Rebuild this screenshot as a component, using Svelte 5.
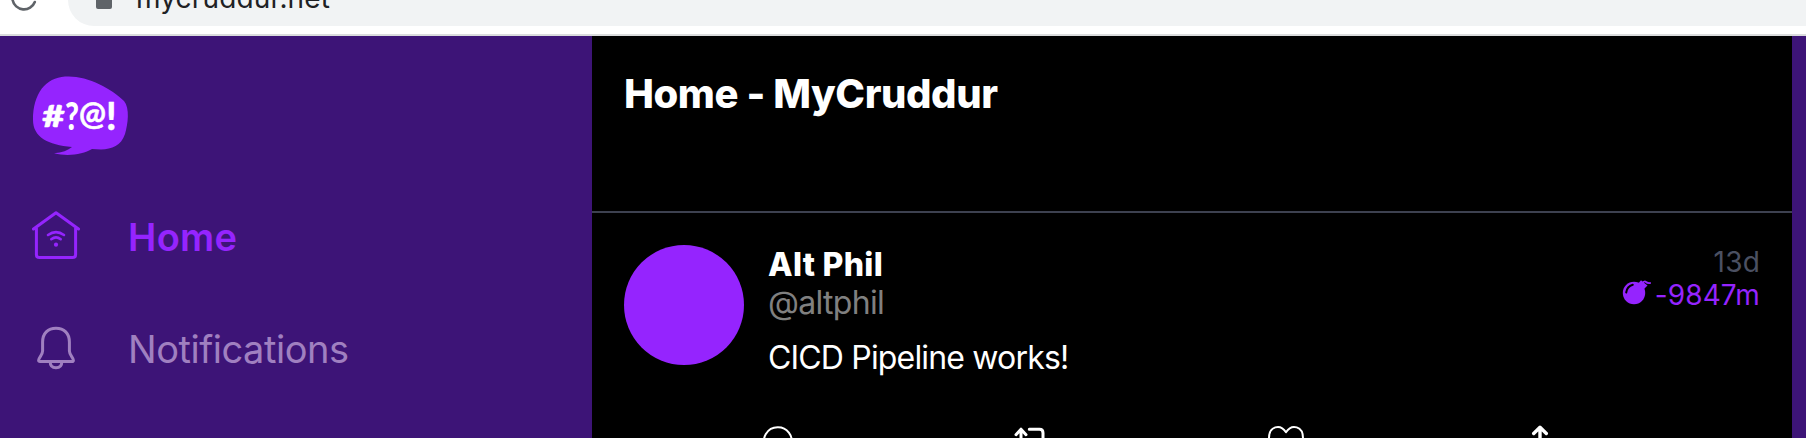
<script>
  const post = {
    name: 'Alt Phil',
    handle: '@altphil',
    message: 'CICD Pipeline works!',
    created: '13d',
    expires: '-9847m'
  };
</script>

<div class="window">
  <div class="toolbar">
    <svg class="reload" width="68" height="34" viewBox="0 0 68 34" aria-hidden="true">
      <path d="M34.8 2A11.6 11.6 0 0 1 12.6 0" fill="none" stroke="#5f6368" stroke-width="2.6" stroke-linecap="round" />
    </svg>
    <div class="address">
      <span class="lock"></span>
      <span class="url">mycruddur.net</span>
    </div>
  </div>

  <div class="app">
    <nav class="sidebar">
      <svg class="logo" width="96" height="80" viewBox="0 0 96 80" role="img" aria-label="Cruddur">
        <path d="M0 44C0 17 13 2 32 .6C53-1 78 12 91 25C97 32 95 48 92 58C88 70 79 73 68 73.5L59 73C50 78 36 81 21 77.3C29 76.5 35 74.5 39 71C15 69 0 61 0 44Z" fill="#9524fe" />
        <g class="mark" fill="#fff" stroke="#fff" stroke-linejoin="round">
          <text x="9.2" y="50.5" font-size="30" stroke-width=".6" textLength="22.4" lengthAdjust="spacingAndGlyphs">#</text>
          <text class="query" x="32" y="53.5" font-size="37" stroke-width="0" textLength="14" lengthAdjust="spacingAndGlyphs">?</text>
          <text class="at" x="46" y="49" font-size="33" stroke-width=".6" textLength="27" lengthAdjust="spacingAndGlyphs">@</text>
          <text x="73" y="53.5" font-size="37" stroke-width=".3">!</text>
        </g>
      </svg>

      <div class="item active">
        <svg width="48" height="48" viewBox="0 0 48 48" fill="none" stroke="currentColor" stroke-width="3" stroke-linecap="round" stroke-linejoin="round" aria-hidden="true">
          <path d="M1.5 18L24 1.7L46.5 18M4.4 17V43.5Q4.4 46.6 7.5 46.6H40.5Q43.6 46.6 43.6 43.5V17" />
          <path d="M16 24Q24 18.2 32 24M19.3 28.2Q24 24.5 28.7 28.2" stroke-width="2.6" />
          <circle cx="24" cy="33.7" r="2.1" fill="currentColor" stroke="none" />
        </svg>
        <span>Home</span>
      </div>
      <div class="item">
        <svg width="48" height="48" viewBox="0 0 48 48" fill="none" stroke="currentColor" stroke-width="3" stroke-linecap="round" stroke-linejoin="round" aria-hidden="true">
          <path d="M10.6 18C10.6 9.5 16 4.2 24 4.2S37.4 9.5 37.4 18V27C37.4 31 41.4 34 41.4 36.2Q41.4 37.5 40 37.5H8Q6.6 37.5 6.6 36.2C6.6 34 10.6 31 10.6 27Z" />
          <path d="M18.2 38C18.2 42 20.5 43.7 24 43.7S29.8 42 29.8 38" />
        </svg>
        <span>Notifications</span>
      </div>
    </nav>

    <main class="feed">
      <header><h1>Home - MyCruddur</h1></header>
      <article>
        <div class="avatar"></div>
        <div class="content">
          <div class="meta">
            <div class="identity">
              <strong>{post.name}</strong>
              <span class="handle">{post.handle}</span>
            </div>
            <div class="times">
              <span class="created">{post.created}</span>
              <span class="expires">
                <svg width="30" height="25" viewBox="0 0 30 25" aria-hidden="true">
                  <circle cx="12" cy="13" r="11.2" fill="#9524fe" />
                  <path d="M16.2 3.5L19 .2L25.5 5.5L22 9Z" fill="#9524fe" />
                  <path d="M20.5 3Q22.5 .5 24 2T28.8 2.9" fill="none" stroke="#9524fe" stroke-width="1.8" />
                  <path d="M4.2 12.5Q5 6.5 10.8 4.8" fill="none" stroke="#000" stroke-width="2" stroke-linecap="round" />
                </svg>
                <span class="remaining">{post.expires}</span>
              </span>
            </div>
          </div>
          <p>{post.message}</p>
          <div class="actions">
            <svg width="40" height="40" viewBox="0 0 40 40" aria-hidden="true">
              <path d="M20 3.2A13.7 13.7 0 1 1 13 28.7L6.3 31L8 24A13.7 13.7 0 0 1 20 3.2Z" stroke-width="2" />
            </svg>
            <svg width="40" height="40" viewBox="0 0 40 40" aria-hidden="true">
              <path d="M4 10.7L9 5.2L14 10.7M9 5.5V28Q9 31 12 31H24" stroke-width="3" />
              <path d="M17.3 5.2H27.5Q31 5.2 31 9V31M25.5 25.5L31 31L37 25.5" stroke-width="3" />
            </svg>
            <svg width="40" height="40" viewBox="0 0 40 40" aria-hidden="true">
              <path d="M20 8.2C14-0.8 3 2.5 3 14C3 22 11 28 20 35C29 28 37 22 37 14C37 2.5 26-0.8 20 8.2Z" stroke-width="2" />
            </svg>
            <svg width="40" height="40" viewBox="0 0 40 40" aria-hidden="true">
              <path d="M13.7 9.5L20 3.3L26.3 9.5M20 3.5V26" stroke-width="3.4" />
              <path d="M6 22V34H34V22" stroke-width="3" />
            </svg>
          </div>
        </div>
      </article>
    </main>
  </div>
</div>

<style>
  :global(body) { margin: 0; overflow: hidden; }
  .window {
    width: 1806px;
    height: 438px;
    display: flex;
    flex-direction: column;
    overflow: hidden;
    background: #3d1477;
    font-family: Inter, sans-serif;
  }
  .toolbar {
    flex: none;
    display: flex;
    height: 34px;
    background: #fff;
    border-bottom: 2px solid #dadcdd;
  }
  .reload { flex: none; }
  .address {
    flex: 1;
    height: 26px;
    display: flex;
    align-items: flex-start;
    overflow: hidden;
    background: #f1f3f4;
    border-bottom-left-radius: 26px;
  }
  .lock {
    width: 16px;
    height: 9px;
    margin-left: 28px;
    background: #5f6368;
    border-radius: 0 0 2px 2px;
  }
  .url {
    margin: -18px 0 0 24px;
    font-size: 28px;
    line-height: 32px;
    letter-spacing: .15px;
    color: #202124;
  }
  .app { flex: 1; display: flex; min-height: 0; }
  .sidebar {
    width: 559px;
    flex: none;
    padding: 40px 0 0 33px;
  }
  .logo { display: block; margin-bottom: 45px; overflow: visible; }
  .mark { font-family: Lato, sans-serif; font-weight: 900; }
  .query { font-weight: 900; }
  .at { font-weight: 700; }
  .item {
    display: flex;
    align-items: center;
    height: 72px;
    margin: 0 0 40px -1px;
    gap: 48px;
    font-size: 38px;
    letter-spacing: -.47px;
    color: #a080c0;
  }
  .item svg { flex: none; margin-bottom: 3px; overflow: visible; }
  .item span { line-height: 48px; }
  .item.active { font-weight: 600; letter-spacing: .3px; color: #9524fe; }
  .item.active svg { margin-bottom: 4px; }
  .feed {
    width: 1200px;
    flex: none;
    background: #000;
    color: #fff;
  }
  header {
    box-sizing: border-box;
    height: 177px;
    padding: 34px 32px 0;
    border-bottom: 2px solid #3d4150;
  }
  h1 {
    margin: 0;
    font-size: 40px;
    line-height: 48px;
    font-weight: 800;
    letter-spacing: -.42px;
  }
  article { display: flex; gap: 24px; padding: 32px; }
  .avatar {
    width: 120px;
    height: 120px;
    flex: none;
    border-radius: 50%;
    background: #9524fe;
  }
  .content { flex: 1; padding-top: 1px; }
  .meta { display: flex; justify-content: space-between; height: 76px; }
  .identity, .times { display: flex; flex-direction: column; }
  .identity { font-size: 32px; line-height: 38px; }
  strong { font-weight: 800; letter-spacing: .3px; }
  .handle { color: #808080; letter-spacing: -.7px; }
  .times { align-items: flex-end; font-size: 28px; line-height: 33px; }
  .created { color: #4b5062; letter-spacing: .2px; }
  .expires { display: flex; gap: 3px; color: #9524fe; letter-spacing: .1px; }
  .expires svg { margin-top: 1px; }
  p {
    margin: 17px 0 47px;
    font-size: 32px;
    line-height: 38px;
    letter-spacing: -.83px;
  }
  .actions { display: flex; gap: 214px; margin-left: -10px; }
  .actions svg {
    flex: none;
    overflow: visible;
    fill: none;
    stroke: #fff;
    stroke-linecap: round;
    stroke-linejoin: round;
  }
</style>
